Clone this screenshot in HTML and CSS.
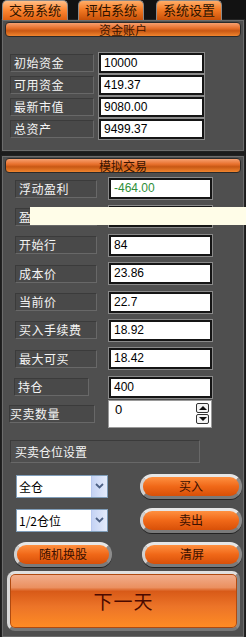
FILE: index.html
```html
<!DOCTYPE html>
<html lang="zh-CN">
<head>
    <meta charset="UTF-8">
    <meta name="viewport" content="width=device-width, initial-scale=1.0">
    <title>模拟交易</title>
    <link rel="stylesheet" href="styles.css">
</head>
<body>
    <div class="tabs">
        <div class="tab active">交易系统</div>
        <div class="tab">评估系统</div>
        <div class="tab">系统设置</div>
    </div>

    <!-- 资金账户 -->
    <div class="panel account">
        <div class="bar">资金账户</div>
        <div class="fields">
            <div class="row"><span class="label">初始资金</span><span class="value">10000</span></div>
            <div class="row"><span class="label">可用资金</span><span class="value">419.37</span></div>
            <div class="row"><span class="label">最新市值</span><span class="value">9080.00</span></div>
            <div class="row"><span class="label">总资产</span><span class="value">9499.37</span></div>
        </div>
    </div>

    <!-- 模拟交易 -->
    <div class="panel trade">
        <div class="bar">模拟交易</div>
        <div class="fields">
            <div class="row"><span class="label">浮动盈利</span><span class="value green">-464.00</span></div>
            <div class="row"><span class="label">盈亏比例</span><span class="value"></span></div>
            <div class="row"><span class="label">开始行</span><span class="value">84</span></div>
            <div class="row"><span class="label">成本价</span><span class="value">23.86</span></div>
            <div class="row"><span class="label">当前价</span><span class="value">22.7</span></div>
            <div class="row"><span class="label">买入手续费</span><span class="value">18.92</span></div>
            <div class="row"><span class="label">最大可买</span><span class="value">18.42</span></div>
            <div class="row"><span class="label short">持仓</span><span class="value">400</span></div>
        </div>

        <div class="qty">
            <span class="label">买卖数量</span>
            <span class="spin">
                <span class="spin-text">0</span>
                <span class="spin-btns">
                    <span class="arrow up"></span>
                    <span class="arrow down"></span>
                </span>
            </span>
        </div>

        <div class="group">买卖仓位设置</div>

        <div class="actions">
            <div class="select">
                <span>全仓</span>
                <span class="drop"><svg width="9" height="6" viewBox="0 0 9 6"><path d="M1 1 L4.5 4.5 L8 1" fill="none" stroke="#4d6185" stroke-width="1.8"/></svg></span>
            </div>
            <button class="pill">买入</button>
            <div class="select">
                <span>1/2仓位</span>
                <span class="drop"><svg width="9" height="6" viewBox="0 0 9 6"><path d="M1 1 L4.5 4.5 L8 1" fill="none" stroke="#4d6185" stroke-width="1.8"/></svg></span>
            </div>
            <button class="pill">卖出</button>
            <button class="pill wide">随机换股</button>
            <button class="pill">清屏</button>
        </div>

        <button class="next">下一天</button>
    </div>

    <div class="tooltip"></div>
</body>
</html>
```

FILE: styles.css
```css
* {
    margin: 0;
    padding: 0;
    box-sizing: border-box;
}

body {
    width: 246px;
    height: 637px;
    background: #1c1c1c;
    font-family: "Noto Sans CJK SC", "Liberation Sans", sans-serif;
    position: relative;
    overflow: hidden;
}

/* 顶部标签 */
.tabs {
    height: 20px;
    display: flex;
    align-items: flex-end;
    background: #121212;
}

.tab {
    width: 66px;
    height: 20px;
    margin-left: 10px;
    border: 1px solid #8a8a8a;
    border-bottom: none;
    border-radius: 5px 5px 0 0;
    background: linear-gradient(#ffae6a, #f37a24 45%, #c85008);
    color: #2b1200;
    font-size: 13px;
    line-height: 18px;
    text-align: center;
}

.tab:first-child {
    margin-left: 2px;
}

.tab:last-child {
    margin-left: 12px;
}

.tab.active {
    background: linear-gradient(#ffc08a, #ff8a36 45%, #e06010);
}

/* 面板 */
.panel {
    margin: 0 2px;
    background: #4f4f4f;
    border: 1px solid #6c6c6c;
    box-shadow: 0 0 0 1px #222;
    padding: 1px 2px 0;
}

.account {
    height: 131px;
}

.trade {
    margin-top: 5px;
    height: 481px;
}

.bar {
    height: 15px;
    border: 1px solid #2a2a2a;
    border-radius: 4px;
    background: linear-gradient(#f7a070, #e8702c 40%, #c85814 60%, #f0842e);
    color: #3a1400;
    font-size: 12px;
    line-height: 13px;
    text-align: center;
}

.fields {
    display: flex;
    flex-direction: column;
}

.account .fields {
    margin-top: 16px;
    gap: 2px;
}

.trade .fields {
    margin-top: 5px;
    gap: 7.4px;
}

.row {
    display: flex;
    align-items: center;
    height: 20px;
}

.trade .row {
    height: 21px;
}

.label {
    height: 18px;
    background: #494949;
    border: 1px solid;
    border-color: #3b3b3b #686868 #686868 #3b3b3b;
    color: #f4f4f4;
    font-size: 12px;
    line-height: 16px;
    letter-spacing: 0.5px;
    padding-left: 3px;
    white-space: nowrap;
    overflow: hidden;
}

.account .label {
    width: 84px;
    margin-left: 5px;
}

.account .value {
    width: 105px;
    margin-left: 5px;
}

.trade .label {
    width: 82px;
    margin-left: 10px;
}

.trade .label.short {
    width: 75px;
    margin-left: 9px;
    margin-right: 8px;
}

.trade .value {
    width: 103px;
    margin-left: 12px;
}

.trade .label.short + .value {
    margin-left: 12px;
}

.value {
    height: 100%;
    background: #fff;
    border: 2px solid #151515;
    box-shadow: 0 0 0 1px #8a8a8a;
    color: #000;
    font-family: "Liberation Sans", Arial, sans-serif;
    font-size: 12px;
    line-height: 16px;
    padding-left: 3px;
}

.value.green {
    color: #2f8f3a;
}

/* 买卖数量 */
.qty {
    display: flex;
    align-items: center;
    height: 28px;
    margin-top: 2px;
}

.qty .label {
    width: 86px;
    margin-left: 4px;
    padding-left: 0;
}

.spin {
    width: 104px;
    height: 28px;
    margin-left: 13px;
    background: #fff;
    border: 1px solid #9a9a9a;
    display: flex;
    justify-content: space-between;
    padding: 2px 2px 0 6px;
}

.spin-text {
    font-family: "Liberation Sans", Arial, sans-serif;
    font-size: 13px;
    line-height: 14px;
}

.spin-btns {
    display: flex;
    flex-direction: column;
    gap: 1px;
}

.arrow {
    width: 13px;
    height: 10px;
    border: 1px solid #333;
    border-radius: 2px;
    background: #f4f4f4;
    position: relative;
}

.arrow::after {
    content: "";
    position: absolute;
    left: 2px;
    border-left: 4px solid transparent;
    border-right: 4px solid transparent;
}

.arrow.up::after {
    top: 2px;
    border-bottom: 4px solid #111;
}

.arrow.down::after {
    top: 2px;
    border-top: 4px solid #111;
}

/* 仓位设置 */
.group {
    width: 190px;
    height: 23px;
    margin: 12px 0 0 5px;
    border: 1px solid;
    border-color: #3b3b3b #686868 #686868 #3b3b3b;
    color: #f4f4f4;
    font-size: 12px;
    line-height: 21px;
    padding-left: 4px;
}

.actions {
    display: grid;
    grid-template-columns: 110px 102px;
    grid-template-rows: 25px 25px 25px;
    column-gap: 12px;
    row-gap: 9px;
    margin: 11px 0 0 9px;
}

.select {
    width: 92px;
    height: 23px;
    margin: 1px 0 0 2px;
    background: #fff;
    border: 1px solid #7f9db9;
    display: flex;
    align-items: center;
    justify-content: space-between;
    font-size: 12px;
    padding-left: 2px;
}

.drop {
    width: 16px;
    height: 21px;
    background: linear-gradient(90deg, #c5d3f4, #e4ebfb);
    border-left: 1px solid #b9c9ef;
    display: flex;
    align-items: center;
    justify-content: center;
}

.pill {
    height: 25px;
    border: 3px solid #bdbdbd;
    border-color: #e6e6e6 #8c8c8c #7a7a7a #d0d0d0;
    border-radius: 12px;
    background: linear-gradient(#ff9040, #f06818 50%, #d85008);
    color: #3a1000;
    font-family: "Noto Sans CJK SC", sans-serif;
    font-size: 12px;
    line-height: 18px;
    box-shadow: 0 1px 0 #222;
}

.pill.wide {
    width: 98px;
    margin-left: 0;
}

.actions .pill:nth-child(2),
.actions .pill:nth-child(4) {
    width: 102px;
    margin-left: 4px;
}

.actions .pill:nth-child(6) {
    width: 100px;
    margin-left: 6px;
}

/* 下一天 */
.next {
    display: block;
    width: 233px;
    height: 60px;
    margin: 4px 0 0 2px;
    border: 3px solid;
    border-color: #e0e0e0 #8a8a8a #777 #d8d8d8;
    border-radius: 8px;
    background: linear-gradient(#f2b090, #eb9060 25%, #d85a18 32%, #ec7428 60%, #ff8c24);
    color: #4a0a00;
    font-family: "Noto Sans CJK SC", sans-serif;
    font-size: 19px;
    letter-spacing: 1px;
    box-shadow: inset 0 0 0 1px #b04a10;
}

/* 提示框 */
.tooltip {
    position: absolute;
    left: 30px;
    top: 207px;
    width: 216px;
    height: 18px;
    background: #fffde8;
}
```
